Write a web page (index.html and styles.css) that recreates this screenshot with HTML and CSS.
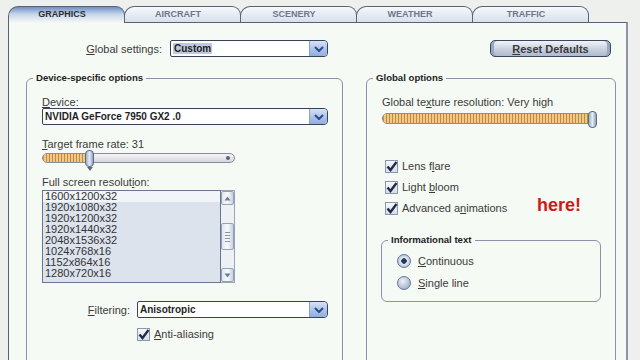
FILE: index.html
```html
<!DOCTYPE html>
<html lang="en-US">
  <head>
    <meta charset="utf-8" />
    <meta name="viewport" content="width=device-width" />
    <title>Display settings</title>
    <link rel="stylesheet" href="styles.css">
  </head>
  <body>
    <div class="window">
      <div class="tabs">
        <div class="tab active">GRAPHICS</div>
        <div class="tab">AIRCRAFT</div>
        <div class="tab">SCENERY</div>
        <div class="tab">WEATHER</div>
        <div class="tab">TRAFFIC</div>
      </div>

      <div class="panel">
        <div class="top-row">
          <span class="label global-label"><u>G</u>lobal settings:</span>
          <div class="combo combo-global">
            <span class="combo-value"><span class="highlight">Custom</span></span>
            <span class="combo-btn"><svg width="10" height="6" viewBox="0 0 10 6"><path d="M1 1 L5 5 L9 1" fill="none" stroke="#2b4a86" stroke-width="2"/></svg></span>
          </div>
          <button class="reset-btn"><u>R</u>eset Defaults</button>
        </div>

        <div class="groups">
          <fieldset class="group group-device">
            <legend>Device-specific options</legend>
            <div class="group-body">
              <div class="label"><u>D</u>evice:</div>
              <div class="combo combo-device">
                <span class="combo-value">NVIDIA GeForce 7950 GX2 .0</span>
                <span class="combo-btn"><svg width="10" height="6" viewBox="0 0 10 6"><path d="M1 1 L5 5 L9 1" fill="none" stroke="#2b4a86" stroke-width="2"/></svg></span>
              </div>

              <div class="label row-gap"><u>T</u>arget frame rate: 31</div>
              <div class="slider slider-frame">
                <div class="track">
                  <div class="fill" style="width: 44px"></div>
                  <span class="end-dot"></span>
                </div>
                <span class="thumb" style="left: 43px"></span>
              </div>

              <div class="label row-gap">Full screen resolut<u>i</u>on:</div>
              <div class="listbox">
                <ul class="list">
                  <li class="selected">1600x1200x32</li>
                  <li>1920x1080x32</li>
                  <li>1920x1200x32</li>
                  <li>1920x1440x32</li>
                  <li>2048x1536x32</li>
                  <li>1024x768x16</li>
                  <li>1152x864x16</li>
                  <li>1280x720x16</li>
                </ul>
                <div class="scrollbar">
                  <span class="sb-btn"><svg width="7" height="5" viewBox="0 0 7 5"><path d="M0.5 4.5 L3.5 0.5 L6.5 4.5 Z" fill="#6f7c93"/></svg></span>
                  <span class="sb-space"></span>
                  <span class="sb-thumb"><i></i><i></i><i></i><i></i></span>
                  <span class="sb-space"></span>
                  <span class="sb-btn"><svg width="7" height="5" viewBox="0 0 7 5"><path d="M0.5 0.5 L3.5 4.5 L6.5 0.5 Z" fill="#6f7c93"/></svg></span>
                </div>
              </div>

              <div class="filter-row">
                <span class="label filter-label"><u>F</u>iltering:</span>
                <div class="combo combo-filter">
                  <span class="combo-value">Anisotropic</span>
                  <span class="combo-btn"><svg width="10" height="6" viewBox="0 0 10 6"><path d="M1 1 L5 5 L9 1" fill="none" stroke="#2b4a86" stroke-width="2"/></svg></span>
                </div>
              </div>

              <div class="check-row aa-row">
                <span class="check"><svg width="13" height="13" viewBox="0 0 13 13"><path d="M2.5 6.5 L5.5 10 L11.5 2" fill="none" stroke="#1f2c4c" stroke-width="2.4"/></svg></span>
                <span><u>A</u>nti-aliasing</span>
              </div>
            </div>
          </fieldset>

          <fieldset class="group group-global">
            <legend>Global options</legend>
            <div class="group-body">
              <div class="label">Global te<u>x</u>ture resolution: Very high</div>
              <div class="slider slider-texture">
                <div class="track">
                  <div class="fill" style="width: 208px"></div>
                </div>
                <span class="thumb" style="left: 206px"></span>
              </div>

              <div class="checks">
                <div class="check-row">
                  <span class="check"><svg width="13" height="13" viewBox="0 0 13 13"><path d="M2.5 6.5 L5.5 10 L11.5 2" fill="none" stroke="#1f2c4c" stroke-width="2.4"/></svg></span>
                  <span>Lens f<u>l</u>are</span>
                </div>
                <div class="check-row">
                  <span class="check"><svg width="13" height="13" viewBox="0 0 13 13"><path d="M2.5 6.5 L5.5 10 L11.5 2" fill="none" stroke="#1f2c4c" stroke-width="2.4"/></svg></span>
                  <span>Light <u>b</u>loom</span>
                </div>
                <div class="check-row">
                  <span class="check"><svg width="13" height="13" viewBox="0 0 13 13"><path d="M2.5 6.5 L5.5 10 L11.5 2" fill="none" stroke="#1f2c4c" stroke-width="2.4"/></svg></span>
                  <span>Advanced a<u>n</u>imations</span>
                  <span class="note">here!</span>
                </div>
              </div>

              <fieldset class="group group-info">
                <legend>Informational text</legend>
                <div class="info-body">
                  <div class="radio-row">
                    <span class="radio on"></span>
                    <span><u>C</u>ontinuous</span>
                  </div>
                  <div class="radio-row">
                    <span class="radio"></span>
                    <span><u>S</u>ingle line</span>
                  </div>
                </div>
              </fieldset>
            </div>
          </fieldset>
        </div>
      </div>
    </div>
  </body>
</html>
```

FILE: styles.css
```css
html {
  font-family: "Liberation Sans", Arial, sans-serif;
  font-size: 11px;
  color: #3a3a3a;
}

body {
  margin: 0;
  background: #eef0ee;
  overflow: hidden;
}

u {
  text-decoration: underline;
  text-underline-offset: 1px;
}

.window {
  padding-top: 6px;
}

/* tabs */

.tabs {
  display: flex;
  margin-left: 8px;
  height: 16px;
}

.tab {
  box-sizing: border-box;
  width: 117px;
  height: 16px;
  padding-right: 9px;
  border: 1px solid #5c6176;
  border-bottom: none;
  border-radius: 10px 9px 0 0;
  background: linear-gradient(#f6f8fb, #d8e0ea);
  color: #6d778a;
  font-size: 9px;
  font-weight: bold;
  line-height: 15px;
  text-align: center;
}

.tab + .tab {
  margin-left: -1px;
}

.tab.active {
  position: relative;
  z-index: 1;
  height: 17px;
  background: linear-gradient(#6d90c4, #c6d6ea 45%, #f6faf5);
  color: #2e2e2e;
}

/* main panel */

.panel {
  margin-left: 8px;
  width: 617px;
  min-height: 340px;
  background: #f6faf5;
  border: 1px solid #5a5f73;
  border-right: 2px solid #8f93a8;
}

.top-row {
  display: flex;
  align-items: center;
  margin-top: 17px;
}

.label {
  line-height: 12px;
  white-space: nowrap;
}

.global-label {
  width: 153px;
  text-align: right;
  margin-right: 8px;
}

/* combo boxes */

.combo {
  box-sizing: border-box;
  display: flex;
  height: 17px;
  background: #fff;
  border: 1px solid #3b4258;
  border-radius: 2px 4px 4px 2px;
}

.combo-value {
  flex: 1;
  padding-left: 2px;
  font-size: 10px;
  font-weight: bold;
  color: #1e1e1e;
  line-height: 15px;
}

.highlight {
  background: #c0c9dd;
  padding: 0 1px;
}

.combo-btn {
  width: 17px;
  display: flex;
  align-items: center;
  justify-content: center;
  background: linear-gradient(#d6e2f6, #a9c0ea 60%, #90ade2);
  border-left: 1px solid #8ba2c8;
  border-radius: 0 4px 4px 0;
}

.combo-global {
  width: 158px;
}

.combo-device {
  width: 286px;
}

.combo-filter {
  width: 191px;
}

.reset-btn {
  margin-left: 162px;
  width: 121px;
  height: 17px;
  padding: 0;
  border: 1px solid #3a4660;
  border-radius: 5px;
  background: linear-gradient(#f2f4f8, #c9d1df 55%, #aeb9cd);
  box-shadow: inset -3px 0 0 #9aa7c0, inset 3px 0 0 #9aa7c0;
  font-family: inherit;
  font-size: 11px;
  font-weight: bold;
  color: #3a3a3a;
}

/* group boxes */

.groups {
  display: flex;
  align-items: flex-start;
  gap: 23px;
  margin-top: 15px;
  padding-left: 17px;
}

.group {
  margin: 0;
  padding: 0;
  border: 1px solid #8d90a8;
  border-radius: 6px;
  min-width: 0;
}

.group legend {
  margin-left: 6px;
  padding: 0 3px;
  font-size: 9.6px;
  font-weight: bold;
  color: #222;
  line-height: 12px;
}

.group-device {
  width: 317px;
  box-sizing: border-box;
  height: 300px;
}

.group-global {
  width: 250px;
  box-sizing: border-box;
  height: 300px;
}

.group-body {
  padding: 12px 14px 0 15px;
}

.row-gap {
  margin-top: 13px;
}

/* sliders */

.slider {
  position: relative;
}

.track {
  position: relative;
  box-sizing: border-box;
  border: 1px solid #8b8c99;
  border-radius: 5px;
  background: linear-gradient(#f4f4f6, #d6d7dd);
  overflow: hidden;
}

.fill {
  height: 100%;
  background: repeating-linear-gradient(90deg, #c08a3c 0 1px, #f0c889 1px 3px);
  border-right: 1px solid #a07030;
}

.end-dot {
  position: absolute;
  right: 4px;
  top: 2px;
  width: 4px;
  height: 4px;
  border-radius: 50%;
  background: #5d6070;
}

.thumb {
  position: absolute;
  top: -3px;
  width: 7px;
  height: 15px;
  border: 1px solid #5c6a84;
  border-radius: 4px;
  background: linear-gradient(90deg, #9fb0c9, #e5ebf3 50%, #8ea2c0);
}

.slider-frame {
  width: 193px;
  margin-top: 3px;
}

.slider-frame .track {
  height: 10px;
}

.slider-frame .thumb::after {
  content: "";
  position: absolute;
  left: 1px;
  bottom: -5px;
  border-left: 3px solid transparent;
  border-right: 3px solid transparent;
  border-top: 4px solid #5c6a84;
}

.slider-texture {
  width: 214px;
  margin-top: 5px;
}

.slider-texture .track {
  height: 11px;
}

.slider-texture .thumb {
  top: -2px;
}

/* list box */

.listbox {
  display: flex;
  width: 193px;
  height: 93px;
  margin-top: 2px;
}

.list {
  flex: 1;
  margin: 0;
  padding: 0;
  list-style: none;
  background: #dce3ed;
  border: 1px solid #6b7590;
  color: #333;
}

.list li {
  height: 11px;
  line-height: 11px;
  padding-left: 2px;
}

.list .selected {
  background: #f1f4f8;
}

.scrollbar {
  display: flex;
  flex-direction: column;
  width: 13px;
  background: #eef1f4;
  border: 1px solid #9aa3b5;
  border-left: none;
}

.sb-btn {
  height: 12px;
  display: flex;
  align-items: center;
  justify-content: center;
  background: linear-gradient(90deg, #dfe6ef, #f8fafc 50%, #c8d2e0);
  border: 1px solid #95a2b9;
  border-radius: 2px;
}

.sb-space {
  flex: 1;
}

.sb-thumb {
  height: 25px;
  display: flex;
  flex-direction: column;
  align-items: center;
  justify-content: center;
  gap: 2px;
  background: linear-gradient(90deg, #dfe6ef, #f8fafc 50%, #c8d2e0);
  border: 1px solid #95a2b9;
  border-radius: 2px;
}

.sb-thumb i {
  width: 5px;
  height: 1px;
  background: #8793a9;
}

/* filtering */

.filter-row {
  display: flex;
  align-items: center;
  margin-top: 18px;
}

.filter-label {
  width: 88px;
  text-align: right;
  margin-right: 7px;
}

/* check boxes */

.check-row {
  display: flex;
  align-items: center;
  gap: 4px;
  height: 14px;
}

.check {
  box-sizing: border-box;
  width: 13px;
  height: 13px;
  border: 1px solid #8c97ad;
  background: linear-gradient(#f7f9fb, #d5dde8);
  display: flex;
}

.check svg {
  margin: -1px;
}

.aa-row {
  margin-top: 9px;
  margin-left: 95px;
}

.checks {
  margin-top: 35px;
  padding-left: 3px;
}

.checks .check-row + .check-row {
  margin-top: 7px;
}

.note {
  margin-left: auto;
  margin-right: 20px;
  margin-top: -6px;
  font-size: 18px;
  font-weight: bold;
  color: #d01818;
}

/* informational text */

.group-info {
  width: 220px;
  box-sizing: border-box;
  margin-top: 19px;
  margin-left: -1px;
}

.info-body {
  padding: 8px 0 11px 15px;
}

.radio-row {
  display: flex;
  align-items: center;
  gap: 7px;
  height: 14px;
}

.radio-row + .radio-row {
  margin-top: 8px;
}

.radio {
  box-sizing: border-box;
  width: 14px;
  height: 14px;
  border: 1px solid #66789a;
  border-radius: 50%;
  background: radial-gradient(circle at 40% 35%, #eef2f8, #a9b8d0 70%, #8797b4);
}

.radio.on {
  background: radial-gradient(circle, #273a64 0 2.5px, #e8edf5 3px, #b4c2d9 75%, #8797b4);
}
```
